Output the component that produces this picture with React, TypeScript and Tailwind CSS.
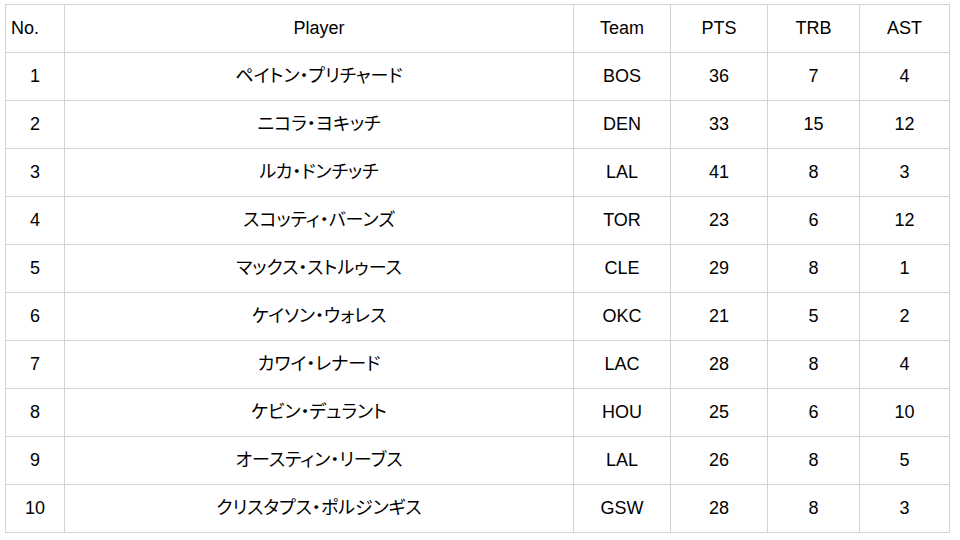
const players = [
  { no: 1, name: 'ペイトン・プリチャード', team: 'BOS', pts: 36, trb: 7, ast: 4 },
  { no: 2, name: 'ニコラ・ヨキッチ', team: 'DEN', pts: 33, trb: 15, ast: 12 },
  { no: 3, name: 'ルカ・ドンチッチ', team: 'LAL', pts: 41, trb: 8, ast: 3 },
  { no: 4, name: 'スコッティ・バーンズ', team: 'TOR', pts: 23, trb: 6, ast: 12 },
  { no: 5, name: 'マックス・ストルゥース', team: 'CLE', pts: 29, trb: 8, ast: 1 },
  { no: 6, name: 'ケイソン・ウォレス', team: 'OKC', pts: 21, trb: 5, ast: 2 },
  { no: 7, name: 'カワイ・レナード', team: 'LAC', pts: 28, trb: 8, ast: 4 },
  { no: 8, name: 'ケビン・デュラント', team: 'HOU', pts: 25, trb: 6, ast: 10 },
  { no: 9, name: 'オースティン・リーブス', team: 'LAL', pts: 26, trb: 8, ast: 5 },
  { no: 10, name: 'クリスタプス・ポルジンギス', team: 'GSW', pts: 28, trb: 8, ast: 3 },
]

const cell = 'border border-[#d4d4d4] h-[48px] p-0 text-center font-normal'

export default function App() {
  return (
    <div
      className="min-h-[540px] bg-white pt-[4px] pl-[5px] text-[18px] text-black [font-feature-settings:'palt']"
      style={{ fontFamily: '"Liberation Sans", Arial, "Noto Sans CJK JP", sans-serif' }}
    >
      <table className="w-[944px] table-fixed border-collapse">
        <colgroup>
          <col className="w-[59px]" />
          <col className="w-[509px]" />
          <col className="w-[97px]" />
          <col className="w-[97px]" />
          <col className="w-[92px]" />
          <col className="w-[90px]" />
        </colgroup>
        <thead>
          <tr>
            <th className={`${cell} !text-left pl-[5px]`}>No.</th>
            <th className={cell}>Player</th>
            <th className={cell}>Team</th>
            <th className={cell}>PTS</th>
            <th className={cell}>TRB</th>
            <th className={cell}>AST</th>
          </tr>
        </thead>
        <tbody>
          {players.map((p) => (
            <tr key={p.no}>
              <td className={cell}>{p.no}</td>
              <td className={cell}>{p.name}</td>
              <td className={cell}>{p.team}</td>
              <td className={cell}>{p.pts}</td>
              <td className={cell}>{p.trb}</td>
              <td className={cell}>{p.ast}</td>
            </tr>
          ))}
        </tbody>
      </table>
    </div>
  )
}
